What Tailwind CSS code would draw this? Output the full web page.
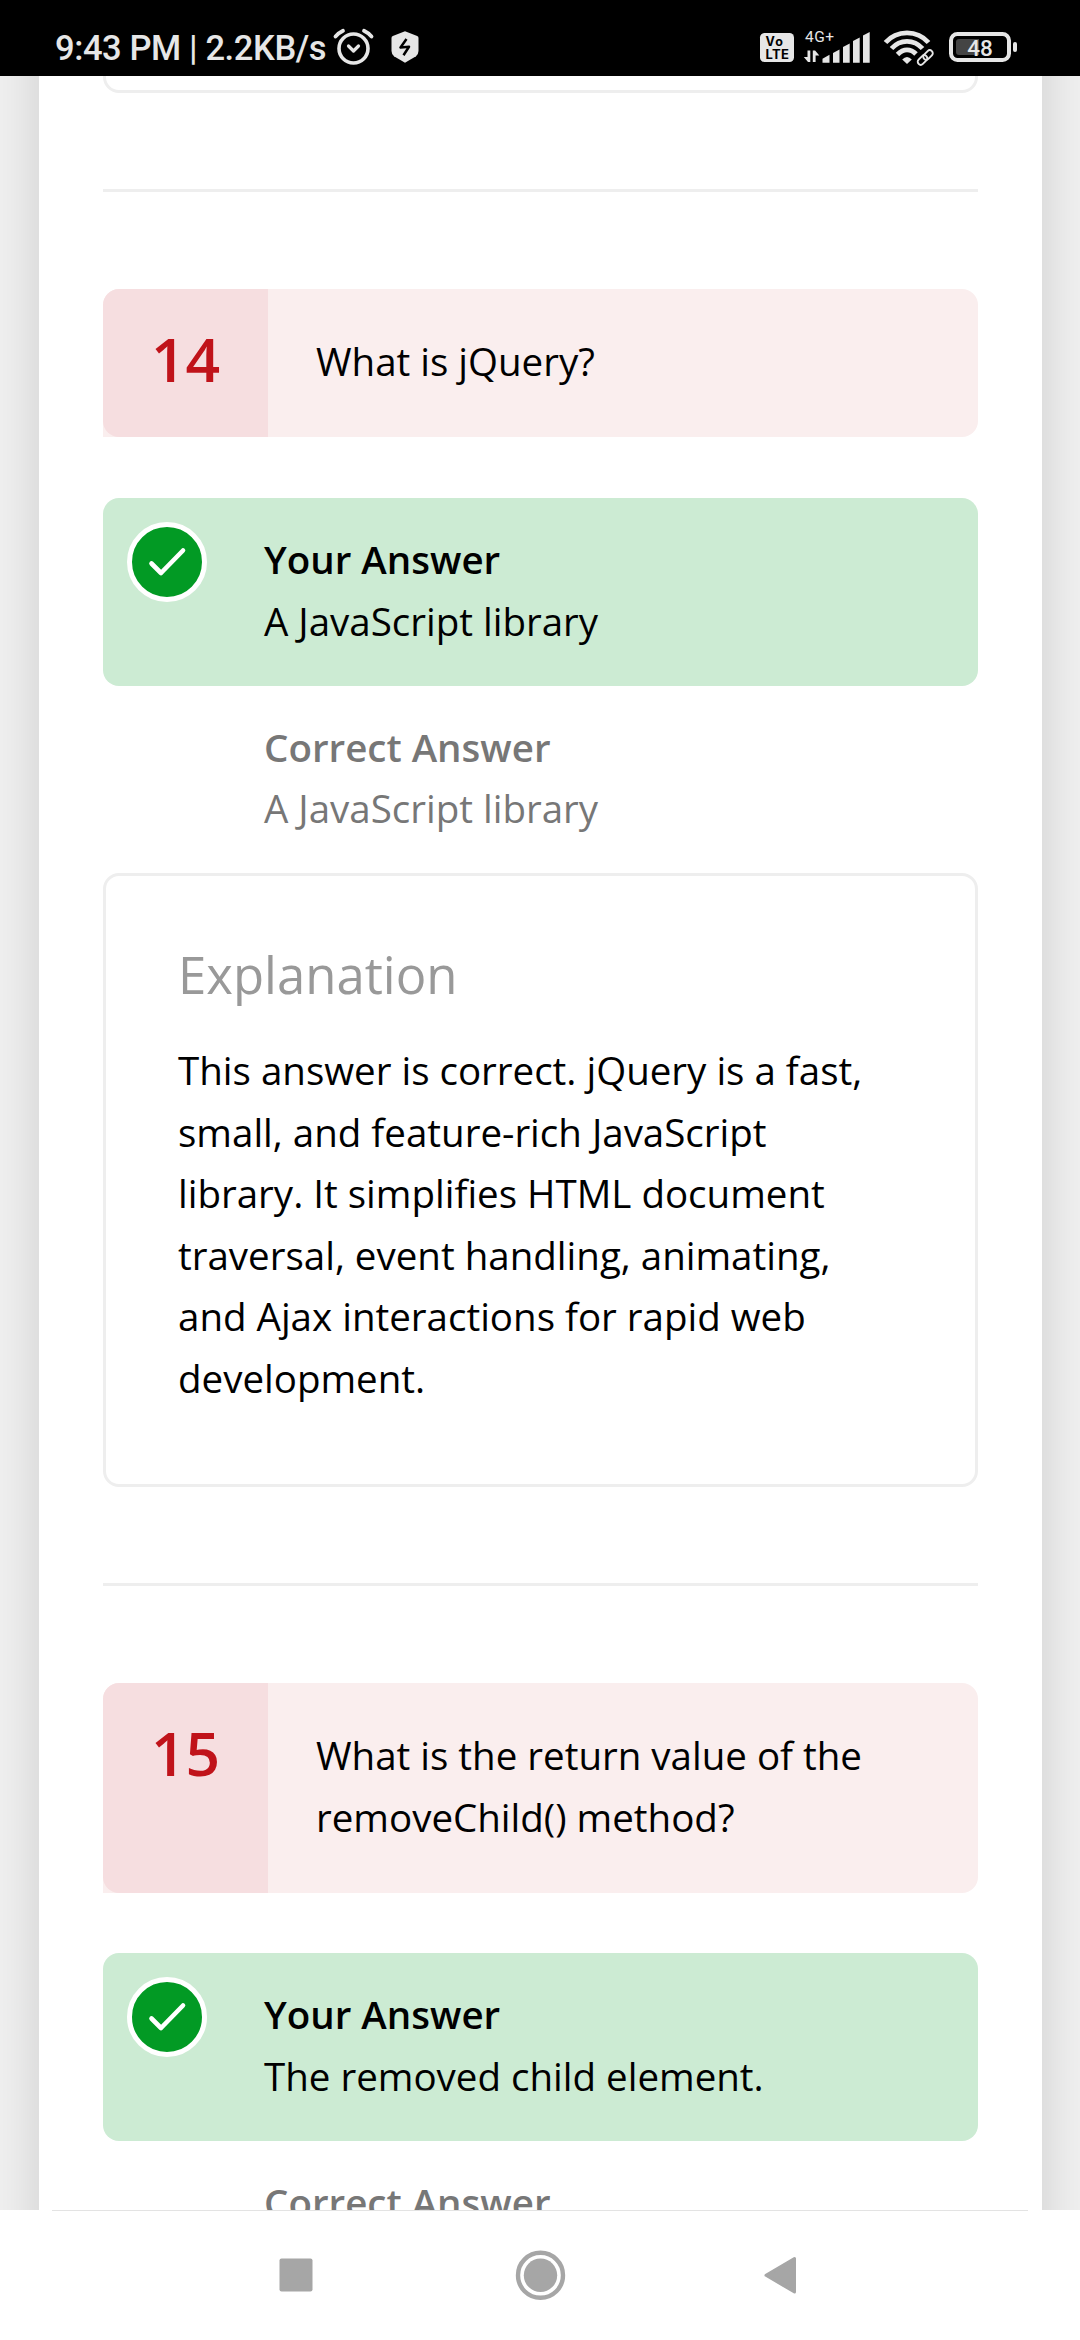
<!DOCTYPE html>
<html lang="en">
<head>
<meta charset="utf-8">
<title>Quiz review</title>
<script src="https://cdn.jsdelivr.net/npm/@tailwindcss/browser@4"></script>
</head>
<body class="bg-white">
<div class="flex h-[2340px] w-[1080px] flex-col overflow-hidden font-['Open_Sans',sans-serif] text-[38.5px] leading-[61.6px] text-black">

  <!-- status bar -->
  <header class="flex h-[76px] shrink-0 items-start bg-black font-[Roboto,sans-serif] text-[#e6e6e6]">
    <div class="ml-[55px] mt-[28px] w-[271px] whitespace-nowrap text-[34.5px] font-medium leading-[40px] tracking-[-0.4px]">9:43 PM | 2.2KB/s</div>
    <svg class="h-[76px] w-[110px] shrink-0" viewBox="326 0 110 76" fill="none" stroke="#e6e6e6">
      <circle cx="353.500" cy="48.500" r="14.500" stroke-width="3.600"/>
      <path d="M335.500 36.500Q338.500 33 343 30.800M371.500 36.500Q368.500 33 364 30.800" stroke-width="3.800" stroke-linecap="round"/>
      <path d="M348.500 46l5 5 5-5" stroke-width="3.200" stroke-linecap="round" stroke-linejoin="round"/>
      <path d="M405 31.300l12.200 4.700q1.300.6 1.300 2v13q0 3-2.500 5.200l-11 6.600-11-6.600q-2.500-2.200-2.500-5.200v-13q0-1.400 1.300-2z" fill="#e6e6e6" stroke="none"/>
      <path d="M406.500 39l-6 8.500 8.500-.8-5.500 8.500" stroke="#000" stroke-width="2.500" stroke-linejoin="round"/>
    </svg>
    <svg class="ml-[314px] h-[76px] w-[290px] shrink-0" viewBox="750 0 290 76" fill="#e6e6e6">
      <rect x="760" y="33" width="34" height="29" rx="4.500"/>
      <g font-family="Inter, sans-serif" font-weight="700" fill="#000">
        <text x="765.500" y="46.200" font-size="12.500" textLength="17.500">Vo</text>
        <text x="765.500" y="59" font-size="13" textLength="23.500">LTE</text>
      </g>
      <text x="805" y="41.700" font-size="15.500" textLength="29" font-family="Roboto, sans-serif">4G+</text>
      <path d="M807.500 50.500h2.800v11.500h-2.300l-4.200-5h3.700zM812.800 62V50.500h2.300l4.200 5h-3.700V62z"/>
      <path d="M822.500 62.700v-4l7-4v8zM833 62.700V53l6.500-3.500v13.200zM843 62.700V47l6.700-3.500v19.200zM853 62.700V41l6.700-3.500v25.200zM863 62.700V35.500l6.700-3.500v30.700z"/>
      <g fill="none" stroke="#e6e6e6" stroke-width="4.800">
        <path d="M885.500 42.500Q894 32.800 907 32.800T928.500 42.500"/>
        <path d="M891.500 48.500Q898 41.300 907 41.300T922.500 48.500"/>
        <path d="M897.500 54.500Q902 49.800 907 49.800T916 54"/>
      </g>
      <path d="M907 64l-4.800-4.500q4.800-5 9.600 0z"/>
      <g fill="none" stroke="#e6e6e6" stroke-width="1.900">
        <rect x="-5.500" y="-3" width="11" height="6" rx="3" transform="translate(922.500 60) rotate(-45)"/>
        <rect x="-5.500" y="-3" width="11" height="6" rx="3" transform="translate(928 55) rotate(-45)"/>
      </g>
      <rect x="951" y="34" width="58" height="26" rx="6.500" fill="none" stroke="#e6e6e6" stroke-width="4"/>
      <path d="M959 39h20v16h-20q-3 0-3-3v-10q0-3 3-3z" fill="#444"/>
      <rect x="1013" y="42" width="4" height="10" rx="2"/>
      <text x="980" y="55.700" text-anchor="middle" font-size="22.500" font-weight="500" font-family="Roboto, sans-serif">48</text>
    </svg>
  </header>

  <!-- page -->
  <main class="h-[2134px] shrink-0 overflow-hidden bg-[#efefef] px-[39px]">
    <div class="-mt-[60px] h-[2300px] w-[1003px] bg-white px-16 pt-[60px] shadow-[0_0_44px_rgba(0,0,0,0.14)]">
      <div class="h-[17px] overflow-hidden"><div class="-mt-20 h-[97px] rounded-[16px] border-[3px] border-[#eee]"></div></div>
      <hr class="mt-24 border-t-[3px] border-[#eee]">

      <section class="pt-[97px]">
        <div class="flex h-[148px] rounded-r-[16px] rounded-tl-[16px] bg-[#faeeee]">
          <div class="w-[165px] rounded-l-[16px] bg-[#f6dee0] pt-[39px] text-center text-[60.5px] font-semibold text-[#c0131a]">14</div>
          <p class="pl-12 pt-[42px]">What is jQuery?</p>
        </div>
        <div class="mt-[61px] flex h-[188px] rounded-[16px] bg-[#ccebd3]">
          <div class="ml-6 mt-6 flex size-20 items-center justify-center rounded-full border-[5px] border-white bg-[#029a24]">
            <svg class="size-[70px]" viewBox="0 0 70 70" fill="none" stroke="#fff" stroke-width="4.600" stroke-linecap="round" stroke-linejoin="round"><path d="M19.500 36.500l9.500 9.500 22-22.500"/></svg>
          </div>
          <div class="pl-[57px] pt-[31px]"><p class="font-semibold">Your Answer</p><p>A JavaScript library</p></div>
        </div>
        <div class="h-[187px] pl-[161px] pt-[31px] leading-[61px] text-[#777]"><p class="font-semibold">Correct Answer</p><p>A JavaScript library</p></div>
        <div class="h-[614px] rounded-[16px] border-[3px] border-[#eee] pl-[72px] pr-[72px] pt-[64px]">
          <h2 class="text-[50.9px] leading-[70px] text-[#999]">Explanation</h2>
          <p class="mt-[30px] whitespace-nowrap">This answer is correct. jQuery is a fast,<br>small, and feature-rich JavaScript<br>library. It simplifies HTML document<br>traversal, event handling, animating,<br>and Ajax interactions for rapid web<br>development.</p>
        </div>
      </section>
      <hr class="mt-24 border-t-[3px] border-[#eee]">

      <section class="pt-[97px]">
        <div class="flex h-[210px] rounded-r-[16px] rounded-tl-[16px] bg-[#faeeee]">
          <div class="w-[165px] rounded-l-[16px] bg-[#f6dee0] pt-[39px] text-center text-[60.5px] font-semibold text-[#c0131a]">15</div>
          <p class="pl-12 pt-[42px]">What is the return value of the<br>removeChild() method?</p>
        </div>
        <div class="mt-[60px] flex h-[188px] rounded-[16px] bg-[#ccebd3]">
          <div class="ml-6 mt-6 flex size-20 items-center justify-center rounded-full border-[5px] border-white bg-[#029a24]">
            <svg class="size-[70px]" viewBox="0 0 70 70" fill="none" stroke="#fff" stroke-width="4.600" stroke-linecap="round" stroke-linejoin="round"><path d="M19.500 36.500l9.500 9.500 22-22.500"/></svg>
          </div>
          <div class="pl-[57px] pt-[31px]"><p class="font-semibold">Your Answer</p><p>The removed child element.</p></div>
        </div>
        <div class="pl-[161px] pt-[31px] text-[#777]"><p class="font-semibold">Correct Answer</p></div>
      </section>
    </div>
  </main>

  <!-- navigation bar -->
  <nav class="h-[130px] shrink-0 bg-white">
    <div class="mx-[52px] h-px bg-[#e3e3e3]"></div>
    <svg class="h-[129px] w-[1080px]" viewBox="0 2211 1080 129" fill="#a6a6a6">
      <rect x="279.500" y="2258.500" width="33" height="33" rx="2"/>
      <circle cx="540.500" cy="2275.300" r="22.500" fill="none" stroke="#a6a6a6" stroke-width="4.400"/>
      <circle cx="540.500" cy="2275.300" r="16.700"/>
      <path d="M766 2275.300L794.500 2258.500V2292z" stroke="#a6a6a6" stroke-width="3" stroke-linejoin="round"/>
    </svg>
  </nav>
</div>
</body>
</html>
